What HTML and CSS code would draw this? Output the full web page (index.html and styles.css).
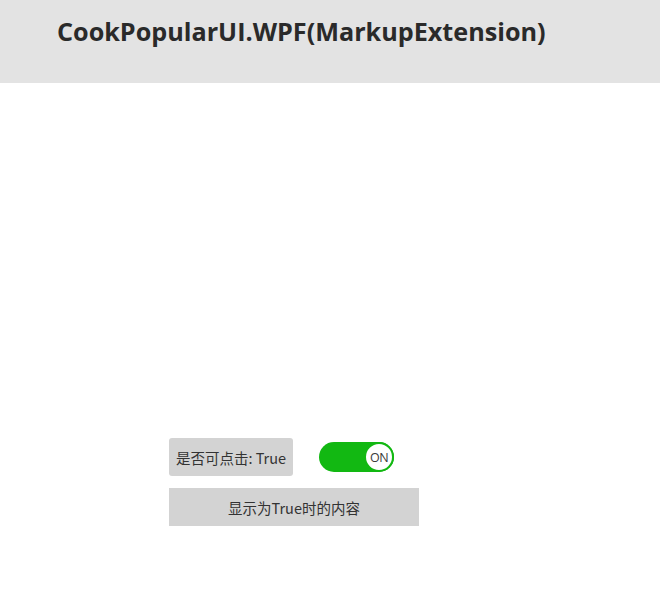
FILE: index.html
```html
<!DOCTYPE html>
<html>
<head>
<meta charset="utf-8">
<link rel="stylesheet" href="styles.css">
</head>
<body>
<header class="header">
  <h1 class="title">CookPopularUI.WPF(MarkupExtension)</h1>
</header>
<main class="main">
  <div class="row">
    <button class="btn btn-state">是否可点击: True</button>
    <div class="toggle">
      <span class="knob">ON</span>
    </div>
  </div>
  <div class="content">显示为True时的内容</div>
</main>
</body>
</html>
```
FILE: styles.css
```css
html, body {
  margin: 0;
  padding: 0;
  background: #ffffff;
}
body {
  width: 660px;
  height: 601px;
  overflow: hidden;
  font-family: "Open Sans", "Noto Sans CJK SC", sans-serif;
}
.header {
  height: 83px;
  background: #e3e3e3;
  box-sizing: border-box;
  padding-left: 57px;
  padding-top: 14px;
}
.title {
  margin: 0;
  font-family: "Open Sans", sans-serif;
  font-weight: 700;
  font-size: 25.2px;
  line-height: 34px;
  color: #2a2a2a;
}
.main {
  padding-left: 169px;
  padding-top: 355px;
}
.row {
  display: flex;
  align-items: center;
  gap: 26px;
}
.btn {
  border: none;
  margin: 0;
  padding: 0;
  font-size: 14.5px;
  color: #333333;
  background: #d3d3d3;
}
.btn-state {
  width: 124px;
  height: 38px;
  border-radius: 3px;
  font-family: "Noto Sans CJK SC", sans-serif;
}
.toggle {
  width: 75px;
  height: 30px;
  border-radius: 15px;
  background: #12b812;
  display: flex;
  justify-content: flex-end;
  align-items: center;
}
.knob {
  width: 30px;
  height: 30px;
  box-sizing: border-box;
  border-radius: 50%;
  background: #ffffff;
  border: 2px solid #12b812;
  display: flex;
  align-items: center;
  justify-content: center;
  font-family: "Open Sans", sans-serif;
  font-size: 12.5px;
  color: #3a3a3a;
  letter-spacing: -0.6px;
}
.content {
  margin-top: 12px;
  width: 250px;
  height: 38px;
  background: #d3d3d3;
  display: flex;
  align-items: center;
  justify-content: center;
  font-family: "Noto Sans CJK SC", sans-serif;
  font-size: 14.5px;
  color: #333333;
}
```
